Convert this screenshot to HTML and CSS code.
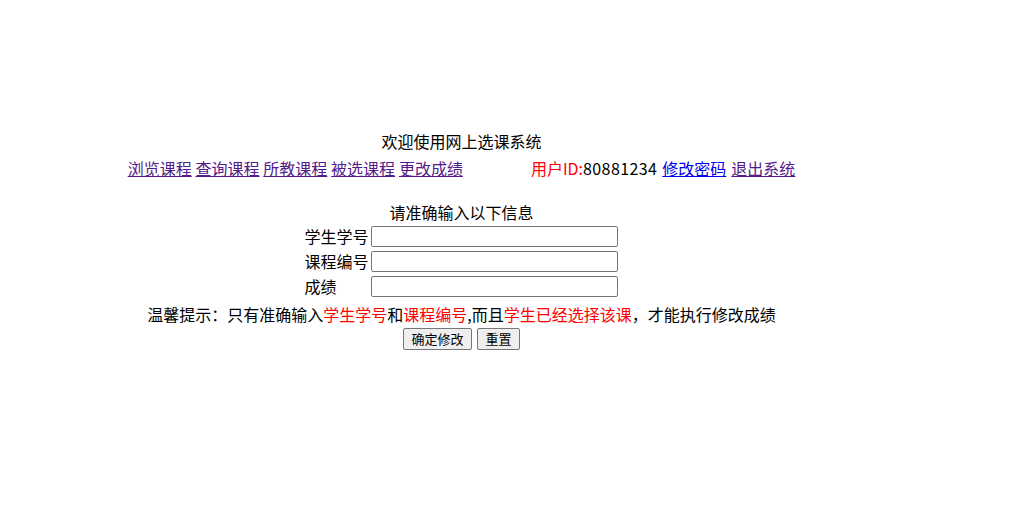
FILE: index.html
```html
<!DOCTYPE html>
<html>
<head>
<meta charset="utf-8">
<link rel="stylesheet" href="styles.css">
</head>
<body>
<div class="page">
  <div class="title">欢迎使用网上选课系统</div>
  <div class="nav">
    <div class="links">
      <a class="visited" href="#">浏览课程</a>
      <a class="visited" href="#">查询课程</a>
      <a class="visited" href="#">所教课程</a>
      <a class="visited" href="#">被选课程</a>
      <a class="visited" href="#">更改成绩</a>
    </div>
    <div class="user">
      <span class="red">用户ID:</span><span class="num">80881234</span>
      <a class="fresh" href="#">修改密码</a>
      <a class="visited" href="#">退出系统</a>
    </div>
  </div>
  <form class="form">
    <div class="subtitle">请准确输入以下信息</div>
    <div class="fields">
      <label class="label">学生学号</label><input class="input" type="text">
      <label class="label">课程编号</label><input class="input" type="text">
      <label class="label">成绩</label><input class="input" type="text">
    </div>
    <div class="tip">温馨提示：只有准确输入<span class="red">学生学号</span>和<span class="red">课程编号</span>,而且<span class="red">学生已经选择该课</span>，才能执行修改成绩</div>
    <div class="buttons">
      <button class="btn" type="button">确定修改</button>
      <button class="btn" type="reset">重置</button>
    </div>
  </form>
</div>
</body>
</html>
```
FILE: styles.css
```css
html, body {
  margin: 0;
  padding: 0;
  background: #ffffff;
}
body {
  font-family: "Noto Sans CJK SC", "Noto Sans", sans-serif;
  font-size: 16px;
  color: #000;
}
.page {
  width: 923px;
  padding-top: 130px;
  display: flex;
  flex-direction: column;
  align-items: center;
}
.title {
  line-height: 22px;
  height: 22px;
}
.nav {
  display: flex;
  gap: 68px;
  margin-top: 5px;
  line-height: 22px;
}
.links {
  display: flex;
  gap: 3.8px;
  white-space: nowrap;
}
.user {
  display: flex;
  white-space: nowrap;
}
.num {
  letter-spacing: 0.4px;
}
.user a {
  margin-left: 5px;
}
a.visited {
  color: #551a8b;
}
a.fresh {
  color: #0000ee;
}
.red {
  color: #ff0000;
}
.form {
  margin-top: 22px;
  display: flex;
  flex-direction: column;
  align-items: center;
}
.subtitle {
  line-height: 22px;
}
.fields {
  display: grid;
  grid-template-columns: 67px 247px;
  row-gap: 4px;
  align-items: center;
  margin-top: 3px;
}
.label {
  line-height: 21px;
}
.input {
  width: 247px;
  height: 21px;
  box-sizing: border-box;
  border: 1px solid #767676;
  border-radius: 2px;
  padding: 1px 2px;
  margin: 0;
  font: inherit;
  font-size: 13px;
}
.tip {
  margin-top: 6px;
  line-height: 22px;
}
.buttons {
  display: flex;
  gap: 5px;
  margin-top: 3px;
}
.btn {
  font-family: "Noto Sans CJK SC", sans-serif;
  font-size: 13px;
  height: 22px;
  line-height: 18px;
  padding: 1px 7.5px;
  border: 1px solid #767676;
  border-radius: 2px;
  background: #efefef;
  color: #000;
  margin: 0;
}
```
